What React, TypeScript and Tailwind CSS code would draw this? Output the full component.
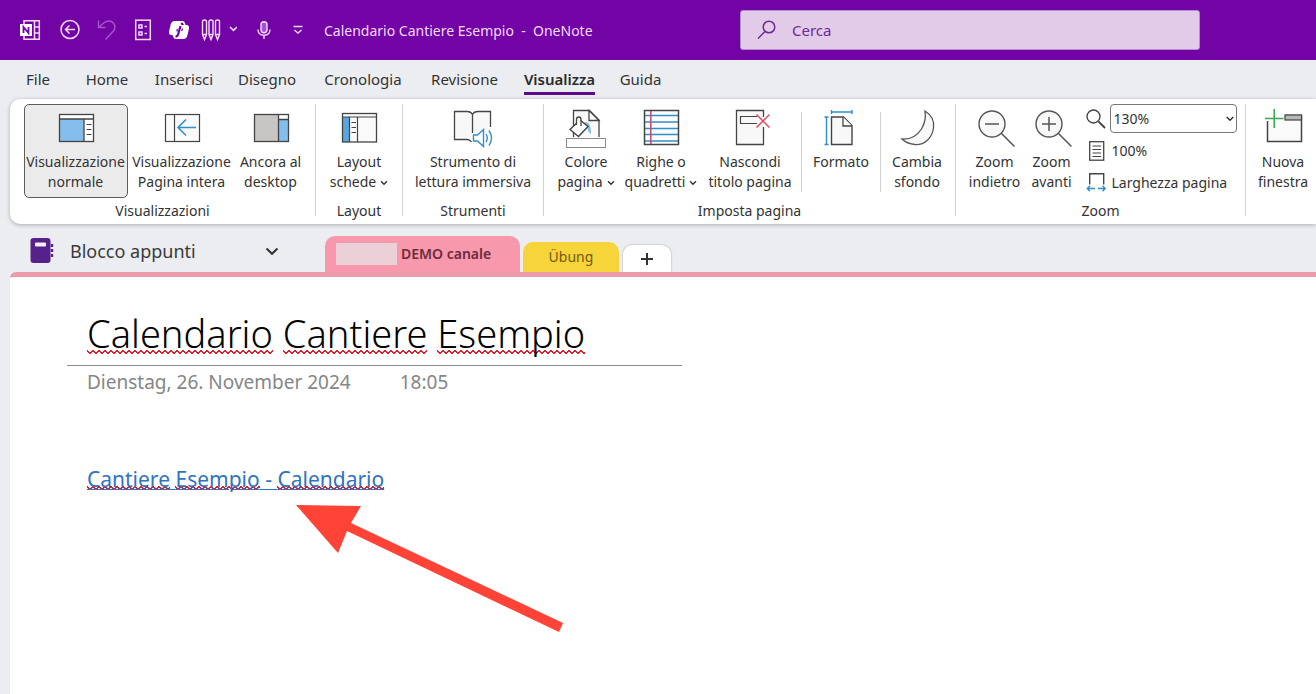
import type { ReactNode } from "react";

const INK = "#444444";
const BLUE = "#2f8fcb";
const SKY = "#83beec";

function Big({ children }: { children: ReactNode }) {
  return (
    <svg width="40" height="40" viewBox="0 0 40 40" fill="none" className="shrink-0" aria-hidden="true">
      {children}
    </svg>
  );
}

function Caret() {
  return (
    <svg width="8" height="6" viewBox="0 0 8 6" fill="none" className="ml-1 inline-block align-middle" aria-hidden="true">
      <path d="M1 1.2 4 4.2 7 1.2" stroke="#333" strokeWidth="1.4" />
    </svg>
  );
}

const icons = {
  normal: (
    <Big>
      <rect x="3.5" y="6.5" width="34" height="27" fill="#fff" />
      <rect x="4" y="11" width="24" height="22" fill={SKY} />
      <path d="M3.5 11H37.5M28 11V33" stroke={INK} strokeWidth="1.3" />
      <path d="M30.5 16.500H35.500M30.500 21.500H35.500M30.500 26.500H35.500" stroke={INK} />
      <rect x="3.500" y="6.500" width="34" height="27" stroke={INK} strokeWidth="1.3" />
    </Big>
  ),
  full: (
    <Big>
      <rect x="3.500" y="6.500" width="34" height="27" fill="#fafafa" stroke={INK} strokeWidth="1.2" />
      <path d="M12.500 6.500V33.500" stroke={INK} strokeWidth="1.2" />
      <path d="M34 19.500H16M24 11.500 16 19.500 24 27.500" stroke={BLUE} strokeWidth="1.6" />
    </Big>
  ),
  dock: (
    <Big>
      <rect x="3.500" y="6.500" width="34" height="27" fill="#c8c6c4" />
      <rect x="27.500" y="6.500" width="10" height="5" fill="#fff" />
      <rect x="27.500" y="11.500" width="10" height="22" fill={SKY} />
      <path d="M27.500 6.500V33.500M27.500 11.500H37.500" stroke={INK} strokeWidth="1.3" />
      <rect x="3.500" y="6.500" width="34" height="27" stroke={INK} strokeWidth="1.3" />
    </Big>
  ),
  tabs: (
    <Big>
      <rect x="3.500" y="5.500" width="34" height="28.500" fill="#fafafa" />
      <rect x="4" y="9" width="6" height="25" fill="#5aa7e0" />
      <path d="M3.500 9H37.500M10.500 9V34M18.500 9V34" stroke={INK} strokeWidth="1.2" />
      <path d="M12.500 14.500H17M12.500 19.500H17M12.500 24.500H17" stroke={INK} />
      <rect x="3.500" y="5.500" width="34" height="28.500" stroke={INK} strokeWidth="1.3" />
    </Big>
  ),
  reader: (
    <Big>
      <path d="M1.500 3.500H14Q18 3.500 19.500 6Q21 3.500 25 3.500H37.500V24H30L20 31 Q17 31.500 14.500 31.500H1.500Z" fill="#f8f8f8" />
      <path d="M18.500 34Q17 31.500 14 31.500H1.500V3.500H14Q18 3.500 19.500 6.500V25M19.500 6.500Q21 3.500 25 3.500H37.500V19" stroke={INK} strokeWidth="1.3" />
      <path d="M20.500 27H24.500L30.500 21.500V38.500L24.500 33H20.500Z" fill="#fff" stroke={BLUE} strokeWidth="1.4" />
      <path d="M33 26Q35.500 30 33 34M36 22.500Q41 30 36 37.500" stroke={BLUE} strokeWidth="1.4" />
    </Big>
  ),
  color: (
    <Big>
      <path d="M7.500 29V2.500H23.500L33 12V29" fill="#fafafa" stroke={INK} strokeWidth="1.3" />
      <path d="M23 2.500V12.500H33Z" fill="#fff" stroke={INK} strokeWidth="1.3" />
      <path d="M18 14.500Q25 12 25 26Q21 24 21.500 18Z" fill={SKY} />
      <path d="M4 21.500 14 12 22 18.500 12.500 28.500Z" fill="#fff" stroke={INK} strokeWidth="1.4" />
      <path d="M10.500 17V11.500Q10.500 9 12.800 9Q15 9 15 11.500V18" fill="#fff" stroke={INK} strokeWidth="1.3" />
      <rect x="0.500" y="30.500" width="39" height="9" fill="#fff" stroke="#8a8a8a" />
    </Big>
  ),
  lines: (
    <Big>
      <rect x="3.500" y="2.500" width="34" height="34" fill="#fcfcfc" />
      <path d="M3.500 7.500H37.500M3.500 14H37.500M3.500 20.500H37.500M3.500 26.500H37.500M3.500 33H37.500" stroke={BLUE} strokeWidth="1.6" />
      <path d="M9.800 2.500V36.500" stroke="#c94668" strokeWidth="1.500" />
      <rect x="3.500" y="2.500" width="34" height="34" stroke={INK} strokeWidth="1.5" />
    </Big>
  ),
  hide: (
    <Big>
      <path d="M33.500 9V2.500H6.500V36.500H33.500V19" fill="#f8f8f8" stroke={INK} strokeWidth="1.3" />
      <path d="M27 8.500H10.500V15.500H27" stroke={INK} strokeWidth="1.2" />
      <path d="M26.500 6.500 39.500 19.500M39.500 6.500 26.500 19.500" stroke="#e0495c" strokeWidth="1.5" />
    </Big>
  ),
  size: (
    <Big>
      <path d="M10.500 9H22.500L31 17.500V36.500H10.500Z" fill="#f8f8f8" stroke={INK} strokeWidth="1.4" />
      <path d="M22 9V18H31" fill="#fff" stroke={INK} strokeWidth="1.3" />
      <path d="M10.500 4H31M10.500 2V6M31 2V6M5.500 9V36.500M3.500 9H7.500M3.500 36.500H7.500" stroke={BLUE} strokeWidth="1.4" />
    </Big>
  ),
  moon: (
    <Big>
      <path d="M28 3C34.500 7 37.500 13 36.500 20C35 30 28 37 18 36.500C12.500 36 8 34 5 31C13 31.500 20 28 24.500 21C28 15 29 9 28 3Z" fill="#f8f8f8" stroke="#555" strokeWidth="1.3" />
    </Big>
  ),
  zoomOut: (
    <Big>
      <circle cx="17" cy="16" r="13" fill="#f8f8f8" stroke="#555" strokeWidth="1.4" />
      <path d="M26.500 25.500 39.500 38.500M10 16H24" stroke="#555" strokeWidth="1.5" />
    </Big>
  ),
  zoomIn: (
    <Big>
      <circle cx="17" cy="16" r="13" fill="#f8f8f8" stroke="#555" strokeWidth="1.4" />
      <path d="M26.500 25.500 39.500 38.500M10 16H24M17 9V23" stroke="#555" strokeWidth="1.5" />
    </Big>
  ),
  window: (
    <Big>
      <path d="M4.500 13V33.500H38.500V7.500H22" fill="#fafafa" stroke={INK} strokeWidth="1.5" />
      <rect x="22" y="7" width="16.500" height="5" fill="#b8b8b8" stroke={INK} strokeWidth="1.2" />
      <path d="M2 10.500H20.500M11.200 1V20" stroke="#35a852" strokeWidth="1.5" />
    </Big>
  ),
};

type RibbonButtonProps = {
  icon: ReactNode;
  lines: [string, string?];
  width: string;
  caret?: boolean;
  active?: boolean;
};

function RibbonButton({ icon, lines, width, caret, active }: RibbonButtonProps) {
  return (
    <button
      type="button"
      className={`flex h-[94px] shrink-0 flex-col items-center rounded-[5px] border pt-[3px] text-sm leading-5 whitespace-nowrap ${
        active ? "border-[#5c5c5c] bg-[#ebebeb]" : "border-transparent"
      } ${width}`}
    >
      {icon}
      <span className="mt-1">{lines[0]}</span>
      {lines[1] && (
        <span>
          {lines[1]}
          {caret && <Caret />}
        </span>
      )}
    </button>
  );
}

function Group({ label, width, children }: { label: string; width: string; children: ReactNode }) {
  return (
    <section aria-label={label || "Finestra"} className={`flex shrink-0 flex-col ${width}`}>
      <div className="flex h-[94px] justify-center">{children}</div>
      <div className="mt-[3px] text-center text-sm leading-5">{label}</div>
    </section>
  );
}

function Rule({ short }: { short?: boolean }) {
  return <div className={`w-px shrink-0 bg-[#d2d2d2] ${short ? "mt-2 h-20" : "h-28"}`} />;
}

function QuickButton({ label, width, children }: { label: string; width: string; children: ReactNode }) {
  return (
    <button type="button" aria-label={label} className={`flex h-8 shrink-0 items-center justify-center ${width}`}>
      {children}
    </button>
  );
}

function TitleBar() {
  return (
    <header className="flex h-[60px] items-center bg-[#7203a5] text-[#f6dcff]">
      <div className="flex flex-1 items-center pl-3">
        <QuickButton label="OneNote" width="w-9">
          <svg width="22" height="22" viewBox="0 0 22 22" fill="none">
            <path d="M5 5.500V1.700H20.300V20.300H5V17" stroke="currentColor" strokeWidth="1.500" />
            <path d="M15.500 2V20M15.500 8H20M15.500 14H20" stroke="currentColor" strokeWidth="1.500" />
            <rect x="1" y="5" width="12" height="12" fill="#fff" />
            <path d="M4.500 14V8L9.500 14V8" stroke="#7203a5" strokeWidth="1.800" />
          </svg>
        </QuickButton>
        <QuickButton label="Indietro" width="w-[44px]">
          <svg width="22" height="22" viewBox="0 0 22 22" fill="none" stroke="currentColor" strokeWidth="1.500">
            <circle cx="11" cy="10.500" r="9" />
            <path d="M16 10.500H6.500M10.500 6.500 6.500 10.500 10.500 14.500" />
          </svg>
        </QuickButton>
        <QuickButton label="Annulla" width="w-[30px]">
          <svg width="22" height="22" viewBox="0 0 22 22" fill="none" stroke="#a552cc" strokeWidth="1.500">
            <path d="M2.500 1.500V8.500H9.500M2.800 8.200 8 3.800C11 1.300 15 1.300 17.300 4C19.500 6.700 19.300 10 17 12.500L9.500 20.500" />
          </svg>
        </QuickButton>
        <QuickButton label="Elenco" width="w-[42px]">
          <svg width="18" height="22" viewBox="0 0 18 22" fill="none" stroke="currentColor" strokeWidth="1.500">
            <rect x="1.700" y="1.200" width="14.600" height="19.300" />
            <rect x="5" y="6" width="3" height="3" />
            <rect x="5" y="13" width="3" height="3" />
            <path d="M10.500 7.500H13M10.500 14.500H13" />
          </svg>
        </QuickButton>
        <QuickButton label="Copilot" width="w-[30px]">
          <svg width="22" height="20" viewBox="0 0 22 20">
            <path d="M6.500 1H14.500Q16.300 1 17 3L17.500 5H18.500Q21.500 5 21 8.500L19.500 15Q18.700 19 15.500 19H8Q5.800 19 5.200 17L4.500 15H3.500Q.5 15 1 11.500L2.500 5Q3.400 1 6.500 1Z" fill="#fff" />
            <path d="M12.800 3.500Q14.500 3.500 15 5M12.500 6 10.200 14.200Q9.600 16.500 7.500 16.500" fill="none" stroke="#7203a5" strokeWidth="2.200" />
            <path d="M9.500 9 8.800 11.500M14.500 8.500 13.700 11" fill="none" stroke="#7203a5" strokeWidth="1.200" />
          </svg>
        </QuickButton>
        <QuickButton label="Penne" width="w-[50px]">
          <svg width="36" height="22" viewBox="0 0 36 22" fill="none" stroke="currentColor" strokeWidth="1.400">
            <path d="M1.500 2.500Q1.500 1 3.500 1T5.500 2.500V15.500L3.500 20.500 1.500 15.500ZM8 2.500Q8 1 10 1T12 2.500V15.500L10 20.500 8 15.500ZM14.500 2.500Q14.500 1 16.500 1T18.500 2.500V15.500L16.500 20.500 14.500 15.500ZM1.500 15.500H5.500M8 15.500H12M14.500 15.500H18.500" />
            <path d="M29 8 32.500 11.300 36 8" strokeWidth="1.600" />
          </svg>
        </QuickButton>
        <QuickButton label="Detta" width="w-[39px]">
          <svg width="16" height="20" viewBox="0 0 16 20" fill="none" stroke="currentColor" strokeWidth="1.400">
            <rect x="5" y="1.700" width="6" height="11" rx="3" fill="#a552cc" />
            <path d="M2 9.500Q2 15.300 8 15.300T14 9.500M8 15.500V19" />
          </svg>
        </QuickButton>
        <QuickButton label="Personalizza barra" width="w-[30px]">
          <svg width="10" height="10" viewBox="0 0 10 10" fill="none" stroke="currentColor" strokeWidth="1.400">
            <path d="M.5 1.500H9.500M1.500 5 5 8 8.500 5" />
          </svg>
        </QuickButton>
        <h1 className="ml-[11px] pt-px text-sm whitespace-pre">{"Calendario Cantiere Esempio  -  OneNote"}</h1>
      </div>
      <label className="mr-[116px] flex h-10 w-[460px] shrink-0 items-center rounded-[3px] border border-[#b58fc9] bg-[#e2cbe9] pl-4 text-[#6b2a94]">
        <svg width="20" height="20" viewBox="0 0 20 20" fill="none" stroke="currentColor" strokeWidth="1.500" aria-hidden="true">
          <circle cx="12" cy="7" r="5.800" />
          <path d="M8 11.500 1 18.500" />
        </svg>
        <input
          type="search"
          aria-label="Cerca"
          placeholder="Cerca"
          className="ml-[15px] min-w-0 flex-1 bg-transparent text-[15px] outline-none placeholder:text-[#6b2a94]"
        />
      </label>
    </header>
  );
}

const MENU: [string, string][] = [
  ["File", "w-12"],
  ["Home", "w-[90px]"],
  ["Inserisci", "w-16"],
  ["Disegno", "w-[102px]"],
  ["Cronologia", "w-[90px]"],
  ["Revisione", "w-[113px]"],
  ["Visualizza", "w-[77px]"],
  ["Guida", "w-[85px]"],
];

function Menu() {
  return (
    <nav className="flex h-[39px] items-start pt-[6px] pl-[14px] text-[15px] leading-[26px]">
      {MENU.map(([name, width]) => (
        <button key={name} type="button" className={`flex shrink-0 justify-center ${width}`}>
          {name === "Visualizza" ? (
            <span className="border-b-[3px] border-[#5b0a8c] font-semibold text-[#2b2b2b]">{name}</span>
          ) : (
            name
          )}
        </button>
      ))}
    </nav>
  );
}

function ZoomOptions() {
  return (
    <div className="ml-[7px] flex flex-col text-sm">
      <div className="flex h-[30px] items-center">
        <svg width="20" height="20" viewBox="0 0 20 20" fill="none" stroke="#444" strokeWidth="1.400" aria-hidden="true">
          <circle cx="7.500" cy="7.500" r="6.500" />
          <path d="M12.500 12.500 19 19" strokeWidth="1.800" />
        </svg>
        <div className="relative ml-1">
          <select
            aria-label="Zoom"
            defaultValue="130"
            className="h-[29px] w-[127px] appearance-none rounded-[4px] border border-[#777] bg-white pl-[3px]"
          >
            <option value="130">130%</option>
            <option value="100">100%</option>
          </select>
          <svg width="8" height="6" viewBox="0 0 8 6" fill="none" className="pointer-events-none absolute top-3 right-[3px]" aria-hidden="true">
            <path d="M.700 1 4 4.300 7.300 1" stroke="#333" strokeWidth="1.500" />
          </svg>
        </div>
      </div>
      <button type="button" className="flex h-[37px] items-center">
        <svg width="20" height="20" viewBox="0 0 20 20" fill="none" stroke="#444" strokeWidth="1.300" aria-hidden="true">
          <rect x="3.700" y=".700" width="14" height="18.500" />
          <path d="M6.500 5H15M6.500 8.500H15M6.500 12H15M6.500 15.500H15" strokeWidth="1" />
        </svg>
        <span className="ml-[6px]">100%</span>
      </button>
      <button type="button" className="flex h-[30px] items-center">
        <svg width="20" height="20" viewBox="0 0 20 20" fill="none" strokeWidth="1.400" aria-hidden="true">
          <path d="M3.700 11.500V.700H17.700V11.500" stroke="#444" />
          <path d="M9 15.500H1.500M4 12.800 1.300 15.500 4 18.200M12 15.500H19M16.500 12.800 19.200 15.500 16.500 18.200" stroke={BLUE} />
        </svg>
        <span className="ml-[6px] whitespace-nowrap">Larghezza pagina</span>
      </button>
    </div>
  );
}

function Ribbon() {
  return (
    <div className="ml-[10px] flex h-[125px] overflow-hidden rounded-l-[10px] bg-white pt-[5px] shadow-[0_1px_4px_rgba(0,0,0,0.28)]">
      <Group label="Visualizzazioni" width="w-[305px]">
        <RibbonButton active icon={icons.normal} lines={["Visualizzazione", "normale"]} width="ml-1 w-[104px]" />
        <RibbonButton icon={icons.full} lines={["Visualizzazione", "Pagina intera"]} width="w-[108px]" />
        <RibbonButton icon={icons.dock} lines={["Ancora al", "desktop"]} width="w-[70px]" />
      </Group>
      <Rule />
      <Group label="Layout" width="w-[86px]">
        <RibbonButton caret icon={icons.tabs} lines={["Layout", "schede"]} width="w-20" />
      </Group>
      <Rule />
      <Group label="Strumenti" width="w-[140px]">
        <RibbonButton icon={icons.reader} lines={["Strumento di", "lettura immersiva"]} width="w-[124px]" />
      </Group>
      <Rule />
      <Group label="Imposta pagina" width="w-[411px]">
        <RibbonButton caret icon={icons.color} lines={["Colore", "pagina"]} width="ml-[3px] w-[74px]" />
        <RibbonButton caret icon={icons.lines} lines={["Righe o", "quadretti"]} width="w-[76px]" />
        <RibbonButton icon={icons.hide} lines={["Nascondi", "titolo pagina"]} width="w-[102px]" />
        <Rule short />
        <RibbonButton icon={icons.size} lines={["Formato"]} width="w-[78px]" />
        <Rule short />
        <RibbonButton icon={icons.moon} lines={["Cambia", "sfondo"]} width="w-[72px]" />
      </Group>
      <Rule />
      <Group label="Zoom" width="w-[289px]">
        <RibbonButton icon={icons.zoomOut} lines={["Zoom", "indietro"]} width="w-[60px]" />
        <RibbonButton icon={icons.zoomIn} lines={["Zoom", "avanti"]} width="w-[54px]" />
        <ZoomOptions />
      </Group>
      <Rule />
      <Group label="" width="w-[74px]">
        <RibbonButton icon={icons.window} lines={["Nuova", "finestra"]} width="w-[72px]" />
      </Group>
    </div>
  );
}

function Sections() {
  return (
    <div className="flex h-[48px] items-end pl-[30px]">
      <button type="button" className="mb-[5px] flex h-8 w-[249px] shrink-0 items-center text-lg text-[#3a3a3a]">
        <svg width="24" height="26" viewBox="0 0 24 26" aria-hidden="true">
          <rect x=".500" y="0" width="20" height="25" rx="3" fill="#56218b" />
          <rect x="5" y="4.500" width="11" height="4" rx="1" fill="#f4eef8" />
          <path d="M22 6V20" stroke="#56218b" strokeWidth="2.400" strokeDasharray="3 2" />
        </svg>
        <span className="ml-4">Blocco appunti</span>
        <svg width="14" height="9" viewBox="0 0 14 9" fill="none" className="ml-auto" aria-hidden="true">
          <path d="M1.500 1.500 7 6.800 12.500 1.500" stroke="#333" strokeWidth="2" />
        </svg>
      </button>
      <div className="ml-[46px] flex items-end">
        <button type="button" className="flex h-9 w-[195px] items-center rounded-t-[10px] bg-[#f898ad] pl-[11px] text-sm font-semibold text-[#6b2b3c]">
          <span className="h-[22px] w-[61px] bg-[#ecd0d8]" />
          <span className="ml-1">DEMO canale</span>
        </button>
        <button type="button" className="ml-[3px] h-[30px] w-24 rounded-t-[10px] bg-[#f6d43a] text-sm text-[#6f5a10]">
          Übung
        </button>
        <button
          type="button"
          aria-label="Nuova sezione"
          className="ml-1 flex h-[27px] w-12 items-center justify-center rounded-t-[9px] bg-white shadow-[0_0_2px_rgba(0,0,0,0.35)]"
        >
          <svg width="12" height="12" viewBox="0 0 12 12" aria-hidden="true">
            <path d="M6 0V12M0 6H12" stroke="#333" strokeWidth="2" />
          </svg>
        </button>
      </div>
    </div>
  );
}

function Misspelled({ children, small }: { children: string; small?: boolean }) {
  return (
    <span
      className={`bg-[linear-gradient(45deg,transparent_24%,#dc2030_30%,#dc2030_40%,transparent_46%),linear-gradient(315deg,transparent_24%,#dc2030_30%,#dc2030_40%,transparent_46%)] bg-[size:6px_4px] bg-repeat-x ${
        small ? "bg-[position:0_calc(100%-3px)]" : "bg-[position:0_calc(100%-5px)]"
      }`}
    >
      {children}
    </span>
  );
}

function Page() {
  return (
    <main className="relative ml-[10px] flex-1 rounded-tl-[6px] border-t-[5px] border-[#ea9cab] bg-white">
      <div className="ml-[57px] w-[615px] border-b border-[#8c8c8c] pt-7 pb-1 pl-5">
        <h2 className="text-[38px] leading-[56px] font-light whitespace-nowrap text-black">
          <Misspelled>Calendario</Misspelled> <Misspelled>Cantiere</Misspelled> <Misspelled>Esempio</Misspelled>
        </h2>
      </div>
      <p className="mt-1 ml-[77px] flex gap-[49px] text-[19px] leading-6 text-[#868686]">
        <span>Dienstag, 26. November 2024</span>
        <span>18:05</span>
      </p>
      <p className="mt-[71px] ml-[77px] text-[21px] leading-7">
        <a href="#calendario" className="text-[#2e74c0] underline decoration-1 underline-offset-[2px]">
          <Misspelled small>Cantiere</Misspelled> <Misspelled small>Esempio</Misspelled> -{" "}
          <Misspelled small>Calendario</Misspelled>
        </a>
      </p>
      <svg width="270" height="132" viewBox="0 0 270 132" className="absolute top-[225px] left-[284px]" aria-hidden="true">
        <path d="M2 3 67 4 57 21 269 121 265 130 53 29 44 51Z" fill="#ff4336" />
      </svg>
    </main>
  );
}

export default function App() {
  return (
    <div className="flex min-h-screen flex-col overflow-x-hidden bg-[#ebedf1] font-['Noto_Sans',sans-serif] text-[#333]">
      <TitleBar />
      <Menu />
      <Ribbon />
      <Sections />
      <Page />
    </div>
  );
}
